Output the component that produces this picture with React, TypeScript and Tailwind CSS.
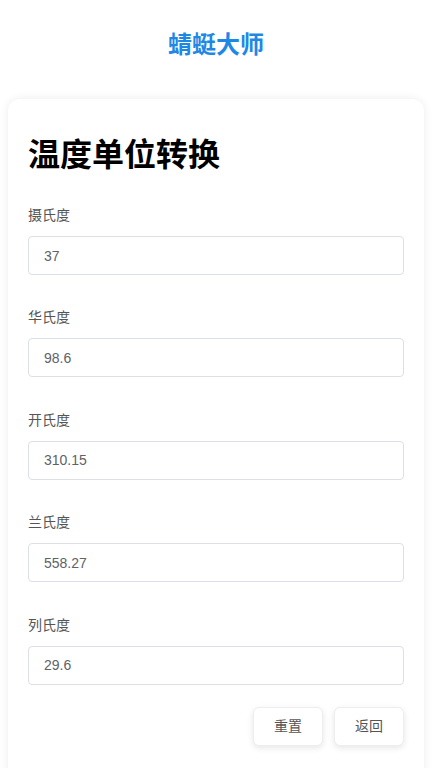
import React, { useState } from "react";

const fields = [
  { label: "摄氏度", value: "37" },
  { label: "华氏度", value: "98.6" },
  { label: "开氏度", value: "310.15" },
  { label: "兰氏度", value: "558.27" },
  { label: "列氏度", value: "29.6" },
];

export default function App() {
  const [vals, setVals] = useState(fields.map((f) => f.value));
  return (
    <div
      className="min-h-screen bg-white"
      style={{ fontFamily: '"Liberation Sans", "Noto Sans CJK SC", sans-serif' }}
    >
      <div className="h-[90px] flex items-center justify-center">
        <span className="text-[24px] font-bold text-[#1e88e5]">蜻蜓大师</span>
      </div>
      <div className="px-2 pt-[9px]">
        <div className="rounded-xl bg-white shadow-[0_0_10px_rgba(0,0,0,0.08)] px-5 pt-8 pb-10">
          <h1 className="text-[32px] leading-[48px] font-bold text-black mb-[26px]">温度单位转换</h1>
          {fields.map((f, i) => (
            <div key={f.label} className="mb-[32.4px]">
              <div className="text-sm leading-[21px] text-[#555] mb-[10px]">{f.label}</div>
              <input
                className="w-full h-[39px] border border-[#dcdfe6] rounded px-[15px] text-sm text-[#606266] outline-none"
                value={vals[i]}
                onChange={(e) => {
                  const v = [...vals];
                  v[i] = e.target.value;
                  setVals(v);
                }}
              />
            </div>
          ))}
          <div className="flex justify-end gap-[11px] -mt-[10px]">
            <button className="w-[70px] h-[39px] rounded-md border border-[#eee] bg-white shadow-[0_2px_6px_rgba(0,0,0,0.1)] text-sm text-[#555]">
              重置
            </button>
            <button className="w-[70px] h-[39px] rounded-md border border-[#eee] bg-white shadow-[0_2px_6px_rgba(0,0,0,0.1)] text-sm text-[#555]">
              返回
            </button>
          </div>
        </div>
      </div>
    </div>
  );
}
